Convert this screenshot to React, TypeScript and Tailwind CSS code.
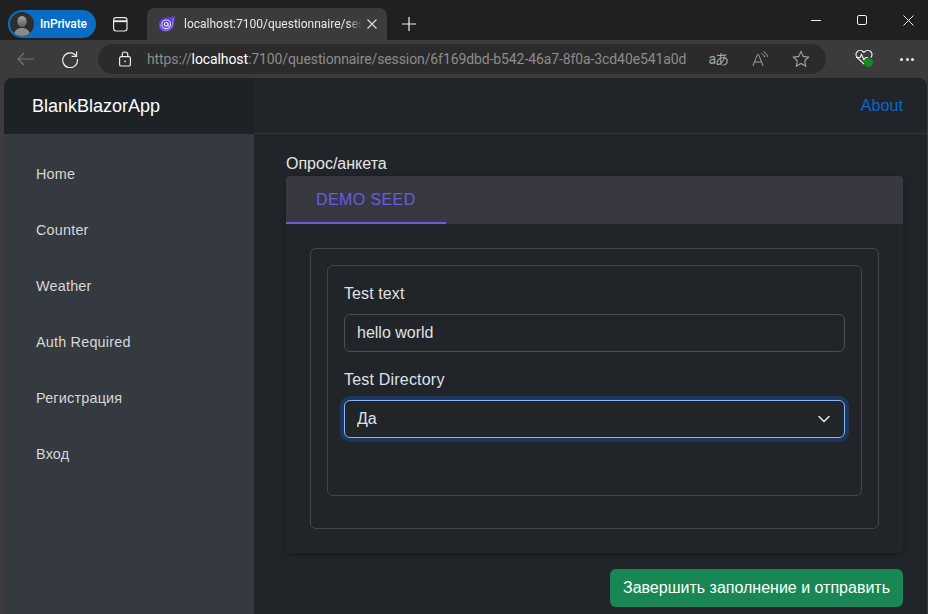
import React from "react";

const ui = "font-['Roboto',sans-serif]";

function Avatar() {
  return (
    <svg width="24" height="24" viewBox="0 0 24 24" className="shrink-0">
      <defs>
        <linearGradient id="pg" x1="0" y1="0" x2="0" y2="1">
          <stop offset="0" stopColor="#a8a8a8" />
          <stop offset="1" stopColor="#585858" />
        </linearGradient>
        <clipPath id="pc"><circle cx="12" cy="12" r="12" /></clipPath>
      </defs>
      <circle cx="12" cy="12" r="12" fill="#2e2e2e" />
      <g clipPath="url(#pc)">
        <ellipse cx="12" cy="9.500" rx="4.600" ry="5.600" fill="url(#pg)" />
        <path d="M3.500 24c.5-5.500 4-8 8.500-8s8 2.500 8.500 8z" fill="#8a8a8a" />
      </g>
    </svg>
  );
}

function BlazorIcon() {
  return (
    <svg width="18" height="18" viewBox="0 0 18 18" fill="none" className="shrink-0">
      <path d="M17 1 11.500 2.300C6.500 1.500 1 4.300.8 9.600c-.2 4.300 3.200 7.200 7.200 7.200 4 0 7.400-2.800 8-6.700.4-2.600.5-5.900 1-9.100z" fill="#5a3ed8" />
      <path d="M15.200 3.200c-.3 2-.5 4.800-.8 6.700-.5 3-3.200 5.400-6.400 5.400-3.300 0-5.900-2.500-5.700-5.800" stroke="#a99bf0" strokeWidth="0.800" />
      <circle cx="8.200" cy="9.300" r="4.300" stroke="#e2dcfb" strokeWidth="1.100" />
      <circle cx="8.200" cy="9.300" r="1.800" stroke="#f3f0ff" strokeWidth="1.100" />
      <path d="M10 8v2.200c0 1 1.300 1.200 1.900.5" stroke="#f3f0ff" strokeWidth="0.900" />
    </svg>
  );
}

function Chrome() {
  return (
    <div className={`shrink-0 ${ui}`}>
      <div className="h-10 bg-[#202020] flex items-end pl-2 relative">
        <div className="self-start mt-[10px] h-7 w-[88px] rounded-full bg-[#0a6cc4] flex items-center pl-[2px] gap-[6px]">
          <Avatar />
          <span className="text-white text-[12px] font-medium leading-none tracking-[-0.1px]">InPrivate</span>
        </div>
        <div className="self-start mt-[17px] ml-[17px] w-[14px] h-[14px]">
          <svg width="15" height="15" viewBox="0 0 15 15" fill="none" stroke="#e6e6e6" strokeWidth="1.200">
            <rect x="0.600" y="0.600" width="13.400" height="13.400" rx="2.400" />
            <path d="M0.600 4.200h13.400" strokeWidth="2" />
          </svg>
        </div>
        <div className="ml-[20px] h-8 w-[240px] rounded-t-lg bg-[#3b3b3b] flex items-center pl-[11px] pr-[10px]">
          <BlazorIcon />
          <span className="ml-[8px] w-[178px] whitespace-nowrap text-[#e8e8e8] text-[12px] leading-[16px] [mask-image:linear-gradient(to_right,black_92%,transparent)]">localhost:7100/questionnaire/ses</span>
          <svg width="10" height="10" viewBox="0 0 10 10" className="ml-[5px]" stroke="#e0e0e0" strokeWidth="1.100"><path d="M.5.5l9 9M9.500.5l-9 9" /></svg>
        </div>
        <svg width="14" height="14" viewBox="0 0 14 14" className="self-start mt-[17px] ml-[15px]" stroke="#f0f0f0" strokeWidth="1.200"><path d="M7 0v14M0 7h14" /></svg>
        <div className="absolute -right-[3px] top-0 flex">
          <div className="w-[46px] h-10 flex items-center justify-center"><div className="w-[10px] h-px bg-[#f0f0f0]" /></div>
          <div className="w-[46px] h-10 flex items-center justify-center"><div className="w-[10px] h-[10px] rounded-[2px] border border-[#f0f0f0]" /></div>
          <div className="w-[46px] h-10 flex items-center justify-center">
            <svg width="11" height="11" viewBox="0 0 11 11" stroke="#f0f0f0" strokeWidth="1"><path d="M.5.5l10 10M10.500.5l-10 10" /></svg>
          </div>
        </div>
      </div>
      <div className="h-[38px] bg-[#3b3b3b] flex items-center">
        <svg width="18" height="14" viewBox="0 0 18 14" fill="none" stroke="#757575" strokeWidth="1.100" className="ml-[17px] shrink-0"><path d="M17 7H1M7 1 1 7l6 6" /></svg>
        <svg width="18" height="18" viewBox="0 0 18 18" fill="none" stroke="#ececec" strokeWidth="1.200" className="ml-[26px] shrink-0">
          <path d="M15.300 6.200A7.400 7.400 0 1 0 16.400 9" />
          <path d="M15.600 1.400v5h-5" />
        </svg>
        <div className="ml-[19px] h-[30px] w-[728px] shrink-0 rounded-full bg-[#2b2b2b] flex items-center pl-[20px] pr-[16px]">
          <svg width="14" height="16" viewBox="0 0 14 16" fill="none" stroke="#ececec" strokeWidth="1.200" className="shrink-0">
            <rect x="1.600" y="5.600" width="10.800" height="9.400" rx="1.600" />
            <path d="M4.200 5.600V3.800a2.800 2.800 0 0 1 5.600 0v1.800" />
            <circle cx="7" cy="10.300" r="0.900" fill="#ececec" stroke="none" />
          </svg>
          <span className="ml-[15px] flex-1 text-[14px] leading-[18px] whitespace-nowrap text-[#8c8c8c] tracking-[-0.1px]">
            https://<span className="text-white">localhost</span>:7100/questionnaire/session/6f169dbd-b542-46a7-8f0a-3cd40e541a0d
          </span>
          <span className="text-[#a8a8a8] text-[14px] leading-none whitespace-nowrap font-['Roboto','Noto_Sans_CJK_JP',sans-serif] tracking-[-1px]">aあ</span>
          <svg width="17" height="16" viewBox="0 0 17 16" fill="none" stroke="#a0a0a0" strokeWidth="1" className="ml-[24px] shrink-0">
            <path d="M.8 15 5.500 3.500h1L11.200 15M2.500 11h7" />
            <path d="M9.500 2.500c1.700.5 2.800 1.800 3 3.800M11.500.8c2.300.8 3.700 2.700 3.900 5" />
          </svg>
          <svg width="18" height="18" viewBox="0 0 18 18" fill="none" stroke="#a0a0a0" strokeWidth="1.100" className="ml-[23px] shrink-0">
            <path d="M9 1.500l2.300 4.900 5.300.7-3.900 3.700 1 5.300L9 13.500l-4.700 2.600 1-5.300-3.900-3.700 5.300-.7z" />
          </svg>
        </div>
        <div className="relative ml-[29px] w-[20px] h-[18px] shrink-0">
          <svg width="18" height="15" viewBox="0 0 18 15" fill="none" stroke="#ececec" strokeWidth="1.200">
            <path d="M9 14 2.200 7.500a4 4 0 0 1 0-5.800 4.300 4.300 0 0 1 6 0l.8.800.8-.8a4.300 4.300 0 0 1 6 0 4 4 0 0 1 0 5.800" />
            <path d="M1 7.500h4l1.500-3 2.500 5.500 1.500-2.500H13" />
          </svg>
          <div className="absolute left-[9px] top-[8px] w-[9px] h-[9px] rounded-full bg-[#138a1f]" />
        </div>
        <div className="ml-[25px] flex gap-[2.500px] shrink-0">
          <div className="w-[3px] h-[3px] rounded-full bg-[#f0f0f0]" />
          <div className="w-[3px] h-[3px] rounded-full bg-[#f0f0f0]" />
          <div className="w-[3px] h-[3px] rounded-full bg-[#f0f0f0]" />
        </div>
      </div>
    </div>
  );
}

const nav = ["Home", "Counter", "Weather", "Auth Required", "Регистрация", "Вход"];

function Sidebar() {
  return (
    <aside className="w-[250px] shrink-0 flex flex-col bg-[#343a40]">
      <div className="h-[56px] shrink-0 bg-[#1d2227] flex items-center pl-7 text-white text-[18px]">BlankBlazorApp</div>
      <nav className="pt-[13px] flex flex-col">
        {nav.map((n) => (
          <div key={n} className="h-14 flex items-center pl-8 text-[14.4px] tracking-[0.2px] text-[#d7d7d7]">{n}</div>
        ))}
      </nav>
    </aside>
  );
}

function Main() {
  return (
    <main className="flex-1 min-w-0 bg-[#212529] flex flex-col text-[#dee2e6] text-[16px]">
      <header className="h-[56px] shrink-0 border-b border-[#32373c] flex items-center justify-end pr-6">
        <span className="text-[#0a66c8] tracking-[0.1px]">About</span>
      </header>
      <div className="pl-8 pr-6 pt-[20px]">
        <div className="h-[22px] leading-[19px] text-[#e6e6e6]">Опрос/анкета</div>
        <div className="rounded-[4px] bg-[#212529] shadow-[0_2px_6px_rgba(0,0,0,0.28)] overflow-hidden">
          <div className="h-12 bg-[#383840] flex">
            <div className="w-40 border-b-2 border-[#6a5be2] flex items-center pl-[30px] pt-[2px] text-[#6a5be2] tracking-[0.4px]">DEMO SEED</div>
          </div>
          <div className="p-6">
            <div className="border border-[#43474c] rounded-[6px] p-4 h-[281px]">
              <div className="border border-[#43474c] rounded-[6px] px-4 pt-4 h-[231px]">
                <div className="h-[24px] leading-[23px] tracking-[0.1px]">Test text</div>
                <input readOnly value="hello world" className="mt-2 block w-full h-[38px] px-3 bg-[#212529] border border-[#495057] rounded-[6px] text-[#dee2e6] outline-none" />
                <div className="mt-[16px] h-[24px] leading-[23px] tracking-[0.2px]">Test Directory</div>
                <div className="relative mt-2">
                  <select defaultValue="Да" className="appearance-none block w-full h-[38px] px-3 bg-[#212529] border border-[#86b7fe] rounded-[6px] text-[#dee2e6] outline-none shadow-[0_0_0_4px_rgba(13,110,253,0.25)]">
                    <option>Да</option>
                    <option>Нет</option>
                  </select>
                  <svg width="12" height="8" viewBox="0 0 12 8" fill="none" stroke="#dee2e6" strokeWidth="1.600" strokeLinecap="round" strokeLinejoin="round" className="absolute right-[15px] top-[15px] pointer-events-none">
                    <path d="M1 1.500l5 5 5-5" />
                  </svg>
                </div>
              </div>
            </div>
          </div>
        </div>
        <div className="mt-4 flex justify-end">
          <div className="h-[38px] px-[13px] rounded-[6px] bg-[#198754] text-white flex items-center">Завершить заполнение и отправить</div>
        </div>
      </div>
    </main>
  );
}

export default function App() {
  return (
    <div className="w-[928px] h-[614px] overflow-hidden bg-[#3b3b3b] flex flex-col font-['Liberation_Sans',sans-serif]">
      <Chrome />
      <div className="flex-1 min-h-0 ml-1 mr-px rounded-t-lg overflow-hidden flex">
        <Sidebar />
        <Main />
      </div>
    </div>
  );
}
